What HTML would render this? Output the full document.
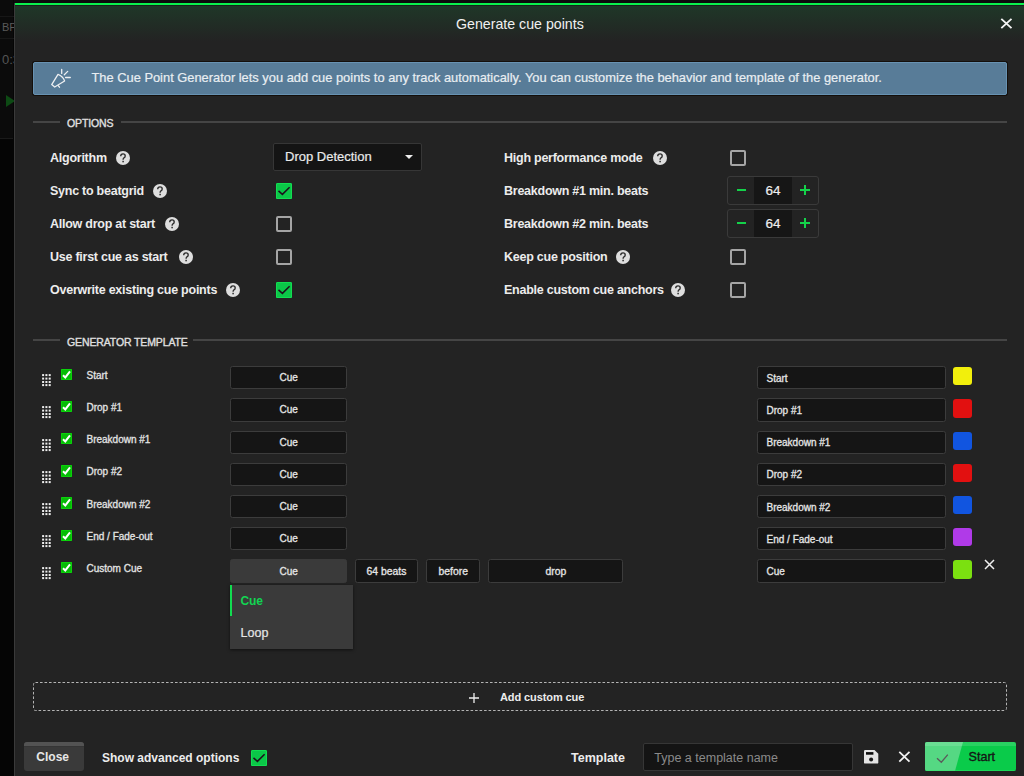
<!DOCTYPE html>
<html><head><meta charset="utf-8">
<style>
*{box-sizing:border-box;margin:0;padding:0}
html,body{width:1024px;height:776px;overflow:hidden;background:#0b0b0b;font-family:"Liberation Sans",sans-serif;color:#e6e6e6}
.a{position:absolute}
svg{display:block}
.t{position:absolute;white-space:nowrap;line-height:1}
.help{position:absolute;width:14px;height:14px;border-radius:50%;background:#dedede}
.help svg{position:absolute;left:0;top:0}
.cb{position:absolute;width:16px;height:16px;border-radius:2px}
.cb.on{background:#0bc748;box-shadow:inset 0 0 0 1px #12de52;border-radius:1.5px}
.cb.off{border:2px solid #a5a5a5}
.sec{position:absolute;height:2px;background:#454545}
.box{position:absolute;height:23.3px;background:#151515;border:1px solid #3c3c3c;border-radius:2.5px}
.sw{position:absolute;width:18.7px;height:18.3px;border-radius:3px}
.tcb{position:absolute;width:11.3px;height:11.3px;background:#06bb06;box-shadow:inset 0 0 0 1px #0ad20a;border-radius:1px}
.hd{position:absolute}
</style></head><body>
<div class="a" style="left:0;top:139px;width:14px;height:640px;background:#050505"></div>
<div class="a" style="left:0;top:138px;width:14px;height:1px;background:#1a1a1a"></div>
<div class="a" style="left:13px;top:0;width:1px;height:776px;background:#050505"></div>
<div class="a" style="left:0;top:16px;width:14px;height:1px;background:#171717"></div>
<div class="a" style="left:0;top:38px;width:14px;height:1px;background:#171717"></div>
<div class="t" style="left:2px;top:22.19px;font-size:11px;font-weight:normal;color:#5a5a5a;letter-spacing:0px;">BP</div>
<div class="t" style="left:2px;top:52.50px;font-size:13px;font-weight:normal;color:#555;letter-spacing:0px;">0:3</div>
<div class="a" style="left:6px;top:95px;width:0;height:0;border-left:9px solid #0d4a14;border-top:6px solid transparent;border-bottom:6px solid transparent"></div>
<div class="a" style="left:14px;top:3px;width:1020px;height:780px;background:#232323;border-left:1px solid #3a3a3a"></div>
<div class="a" style="left:15px;top:5px;width:1009px;height:36px;background:linear-gradient(#1f3828,#232323)"></div>
<div class="a" style="left:15px;top:5px;width:1009px;height:1px;background:#18221b"></div>
<div class="a" style="left:15px;top:3px;width:1009px;height:2px;background:#0af04c"></div>
<div class="t" style="left:456px;top:17.38px;font-size:14.2px;font-weight:normal;color:#f0f0f0;letter-spacing:0px;">Generate cue points</div>
<svg class="a" style="left:1000px;top:18px" width="13" height="12" viewBox="0 0 13 12"><path d="M1.3 0.9L11.5 10.1M11.5 0.9L1.3 10.1" stroke="#f4f4f4" stroke-width="1.9"/></svg>
<div class="a" style="left:32px;top:61px;width:976px;height:35px;background:#140f0b;border-radius:3px"></div><div class="a" style="left:33px;top:62px;width:974px;height:33px;background:#587c98;border:1px solid #6892b2;border-radius:2px"></div>
<svg class="a" style="left:46px;top:64px" width="30" height="30" viewBox="0 0 30 30" fill="none" stroke="#eef0f2" stroke-width="1.3" stroke-linejoin="round" stroke-linecap="round"><path d="M12 10.4Q17 12.2 18.6 17L8.7 23L5.7 20.6Z"/><path d="M12.4 21.8L13.5 23.2"/><path d="M15.7 5.3V9.4M18.3 10.7L21.7 7.4M19.6 13.5H24.3"/></svg>
<div class="t" style="left:91.5px;top:72.11px;font-size:12.87px;font-weight:normal;color:#e9eef2;letter-spacing:0px;-webkit-text-stroke:0.2px #e9eef2">The Cue Point Generator lets you add cue points to any track automatically. You can customize the behavior and template of the generator.</div>
<div class="sec" style="left:33px;top:121px;width:27px"></div>
<div class="t" style="left:67px;top:117.61px;font-size:10.5px;font-weight:normal;color:#e0e0e0;letter-spacing:-0.12px;-webkit-text-stroke:0.35px #e0e0e0">OPTIONS</div>
<div class="sec" style="left:121px;top:121px;width:886px"></div>
<div class="t" style="left:50px;top:151.92px;font-size:12.5px;font-weight:bold;color:#ececec;letter-spacing:-0.25px;">Algorithm</div>
<div class="help" style="left:116px;top:150.5px"><svg width="14" height="14" viewBox="0 0 14 14"><path d="M4.7 5.2Q4.7 2.9 7 2.9Q9.2 2.9 9.2 4.9Q9.2 6.1 8 6.8Q7.1 7.4 7.1 8.7" fill="none" stroke="#2a2a2a" stroke-width="1.35"/><rect x="6.35" y="9.8" width="1.5" height="1.5" fill="#2a2a2a"/></svg></div>
<div class="t" style="left:50px;top:184.92px;font-size:12.5px;font-weight:bold;color:#ececec;letter-spacing:-0.25px;">Sync to beatgrid</div>
<div class="help" style="left:152.5px;top:183.5px"><svg width="14" height="14" viewBox="0 0 14 14"><path d="M4.7 5.2Q4.7 2.9 7 2.9Q9.2 2.9 9.2 4.9Q9.2 6.1 8 6.8Q7.1 7.4 7.1 8.7" fill="none" stroke="#2a2a2a" stroke-width="1.35"/><rect x="6.35" y="9.8" width="1.5" height="1.5" fill="#2a2a2a"/></svg></div>
<div class="cb on" style="left:276px;top:183px"><svg width="16" height="16" viewBox="0 0 16 16"><path d="M2.5 7.9L6.4 11.4L13.6 4.2" fill="none" stroke="#1c101c" stroke-width="1.5"/></svg></div>
<div class="t" style="left:50px;top:217.92px;font-size:12.5px;font-weight:bold;color:#ececec;letter-spacing:-0.25px;">Allow drop at start</div>
<div class="help" style="left:165px;top:216.5px"><svg width="14" height="14" viewBox="0 0 14 14"><path d="M4.7 5.2Q4.7 2.9 7 2.9Q9.2 2.9 9.2 4.9Q9.2 6.1 8 6.8Q7.1 7.4 7.1 8.7" fill="none" stroke="#2a2a2a" stroke-width="1.35"/><rect x="6.35" y="9.8" width="1.5" height="1.5" fill="#2a2a2a"/></svg></div>
<div class="cb off" style="left:276px;top:216px"></div>
<div class="t" style="left:50px;top:250.92px;font-size:12.5px;font-weight:bold;color:#ececec;letter-spacing:-0.25px;">Use first cue as start</div>
<div class="help" style="left:179px;top:249.5px"><svg width="14" height="14" viewBox="0 0 14 14"><path d="M4.7 5.2Q4.7 2.9 7 2.9Q9.2 2.9 9.2 4.9Q9.2 6.1 8 6.8Q7.1 7.4 7.1 8.7" fill="none" stroke="#2a2a2a" stroke-width="1.35"/><rect x="6.35" y="9.8" width="1.5" height="1.5" fill="#2a2a2a"/></svg></div>
<div class="cb off" style="left:276px;top:249px"></div>
<div class="t" style="left:50px;top:283.92px;font-size:12.5px;font-weight:bold;color:#ececec;letter-spacing:-0.25px;">Overwrite existing cue points</div>
<div class="help" style="left:226.3px;top:282.5px"><svg width="14" height="14" viewBox="0 0 14 14"><path d="M4.7 5.2Q4.7 2.9 7 2.9Q9.2 2.9 9.2 4.9Q9.2 6.1 8 6.8Q7.1 7.4 7.1 8.7" fill="none" stroke="#2a2a2a" stroke-width="1.35"/><rect x="6.35" y="9.8" width="1.5" height="1.5" fill="#2a2a2a"/></svg></div>
<div class="cb on" style="left:276px;top:282px"><svg width="16" height="16" viewBox="0 0 16 16"><path d="M2.5 7.9L6.4 11.4L13.6 4.2" fill="none" stroke="#1c101c" stroke-width="1.5"/></svg></div>
<div class="a" style="left:273px;top:143px;width:149px;height:28px;background:#141414;border:1px solid #363636;border-radius:2px"></div>
<div class="t" style="left:285px;top:150.00px;font-size:13px;font-weight:normal;color:#eaeaea;letter-spacing:0px;-webkit-text-stroke:0.2px #eaeaea">Drop Detection</div>
<div class="a" style="left:405px;top:155px;width:0;height:0;border-top:4px solid #eee;border-left:4px solid transparent;border-right:4px solid transparent"></div>
<div class="t" style="left:504px;top:151.92px;font-size:12.5px;font-weight:bold;color:#ececec;letter-spacing:-0.25px;">High performance mode</div>
<div class="help" style="left:653px;top:150.5px"><svg width="14" height="14" viewBox="0 0 14 14"><path d="M4.7 5.2Q4.7 2.9 7 2.9Q9.2 2.9 9.2 4.9Q9.2 6.1 8 6.8Q7.1 7.4 7.1 8.7" fill="none" stroke="#2a2a2a" stroke-width="1.35"/><rect x="6.35" y="9.8" width="1.5" height="1.5" fill="#2a2a2a"/></svg></div>
<div class="cb off" style="left:730px;top:150px"></div>
<div class="t" style="left:504px;top:184.92px;font-size:12.5px;font-weight:bold;color:#ececec;letter-spacing:-0.25px;">Breakdown #1 min. beats</div>
<div class="a" style="left:727px;top:176px;width:92px;height:29px;border:1px solid #3a3a3a;border-radius:3px;background:#232323"></div>
<div class="a" style="left:754px;top:177px;width:38px;height:27px;background:#161616"></div>
<div class="t" style="left:765.5px;top:184.07px;font-size:13.5px;font-weight:normal;color:#eee;letter-spacing:0px;-webkit-text-stroke:0.2px #eee">64</div>
<div class="a" style="left:737px;top:189px;width:9px;height:2px;background:#14d24a"></div>
<div class="a" style="left:800px;top:189px;width:10px;height:2px;background:#14d24a"></div>
<div class="a" style="left:804px;top:185px;width:2px;height:10px;background:#14d24a"></div>
<div class="t" style="left:504px;top:217.92px;font-size:12.5px;font-weight:bold;color:#ececec;letter-spacing:-0.25px;">Breakdown #2 min. beats</div>
<div class="a" style="left:727px;top:209px;width:92px;height:29px;border:1px solid #3a3a3a;border-radius:3px;background:#232323"></div>
<div class="a" style="left:754px;top:210px;width:38px;height:27px;background:#161616"></div>
<div class="t" style="left:765.5px;top:217.07px;font-size:13.5px;font-weight:normal;color:#eee;letter-spacing:0px;-webkit-text-stroke:0.2px #eee">64</div>
<div class="a" style="left:737px;top:222px;width:9px;height:2px;background:#14d24a"></div>
<div class="a" style="left:800px;top:222px;width:10px;height:2px;background:#14d24a"></div>
<div class="a" style="left:804px;top:218px;width:2px;height:10px;background:#14d24a"></div>
<div class="t" style="left:504px;top:250.92px;font-size:12.5px;font-weight:bold;color:#ececec;letter-spacing:-0.25px;">Keep cue position</div>
<div class="help" style="left:615.5px;top:249.5px"><svg width="14" height="14" viewBox="0 0 14 14"><path d="M4.7 5.2Q4.7 2.9 7 2.9Q9.2 2.9 9.2 4.9Q9.2 6.1 8 6.8Q7.1 7.4 7.1 8.7" fill="none" stroke="#2a2a2a" stroke-width="1.35"/><rect x="6.35" y="9.8" width="1.5" height="1.5" fill="#2a2a2a"/></svg></div>
<div class="cb off" style="left:730px;top:249px"></div>
<div class="t" style="left:504px;top:283.92px;font-size:12.5px;font-weight:bold;color:#ececec;letter-spacing:-0.25px;">Enable custom cue anchors</div>
<div class="help" style="left:671px;top:282.5px"><svg width="14" height="14" viewBox="0 0 14 14"><path d="M4.7 5.2Q4.7 2.9 7 2.9Q9.2 2.9 9.2 4.9Q9.2 6.1 8 6.8Q7.1 7.4 7.1 8.7" fill="none" stroke="#2a2a2a" stroke-width="1.35"/><rect x="6.35" y="9.8" width="1.5" height="1.5" fill="#2a2a2a"/></svg></div>
<div class="cb off" style="left:730px;top:282px"></div>
<div class="sec" style="left:33px;top:339px;width:27px"></div>
<div class="t" style="left:67px;top:337.11px;font-size:10.5px;font-weight:normal;color:#e0e0e0;letter-spacing:-0.12px;-webkit-text-stroke:0.35px #e0e0e0">GENERATOR TEMPLATE</div>
<div class="sec" style="left:193px;top:339px;width:814px"></div>
<svg class="hd" style="left:42px;top:374.1px" width="10" height="13" viewBox="0 0 10 13" fill="#eee"><rect x="0.1" y="0.1" width="2" height="2"/><rect x="3.4" y="0.1" width="2" height="2"/><rect x="6.7" y="0.1" width="2" height="2"/><rect x="0.1" y="3.6" width="2" height="2"/><rect x="3.4" y="3.6" width="2" height="2"/><rect x="6.7" y="3.6" width="2" height="2"/><rect x="0.1" y="7.0" width="2" height="2"/><rect x="3.4" y="7.0" width="2" height="2"/><rect x="6.7" y="7.0" width="2" height="2"/><rect x="0.1" y="10.1" width="2" height="2"/><rect x="3.4" y="10.1" width="2" height="2"/><rect x="6.7" y="10.1" width="2" height="2"/></svg>
<div class="tcb" style="left:61px;top:369.0px"><svg width="12" height="12" viewBox="0 0 12 12"><path d="M2 6.2L4.3 8.4L9 2.3" fill="none" stroke="#fff" stroke-width="2"/></svg></div>
<div class="t" style="left:86.5px;top:370.84px;font-size:10px;font-weight:normal;color:#e4e4e4;letter-spacing:0px;-webkit-text-stroke:0.3px #e4e4e4">Start</div>
<div class="box" style="left:230px;top:366.1px;width:117px"></div>
<div class="t" style="left:279.5px;top:373.14px;font-size:10px;font-weight:normal;color:#e6e6e6;letter-spacing:0px;-webkit-text-stroke:0.3px #e6e6e6">Cue</div>
<div class="box" style="left:757px;top:366.1px;width:189px"></div>
<div class="t" style="left:766.5px;top:373.84px;font-size:10px;font-weight:normal;color:#e6e6e6;letter-spacing:0px;-webkit-text-stroke:0.3px #e6e6e6">Start</div>
<div class="sw" style="left:953px;top:367.1px;background:#f2ef0c"></div>
<svg class="hd" style="left:42px;top:406.3px" width="10" height="13" viewBox="0 0 10 13" fill="#eee"><rect x="0.1" y="0.1" width="2" height="2"/><rect x="3.4" y="0.1" width="2" height="2"/><rect x="6.7" y="0.1" width="2" height="2"/><rect x="0.1" y="3.6" width="2" height="2"/><rect x="3.4" y="3.6" width="2" height="2"/><rect x="6.7" y="3.6" width="2" height="2"/><rect x="0.1" y="7.0" width="2" height="2"/><rect x="3.4" y="7.0" width="2" height="2"/><rect x="6.7" y="7.0" width="2" height="2"/><rect x="0.1" y="10.1" width="2" height="2"/><rect x="3.4" y="10.1" width="2" height="2"/><rect x="6.7" y="10.1" width="2" height="2"/></svg>
<div class="tcb" style="left:61px;top:401.1px"><svg width="12" height="12" viewBox="0 0 12 12"><path d="M2 6.2L4.3 8.4L9 2.3" fill="none" stroke="#fff" stroke-width="2"/></svg></div>
<div class="t" style="left:86.5px;top:403.04px;font-size:10px;font-weight:normal;color:#e4e4e4;letter-spacing:0px;-webkit-text-stroke:0.3px #e4e4e4">Drop #1</div>
<div class="box" style="left:230px;top:398.3px;width:117px"></div>
<div class="t" style="left:279.5px;top:405.34px;font-size:10px;font-weight:normal;color:#e6e6e6;letter-spacing:0px;-webkit-text-stroke:0.3px #e6e6e6">Cue</div>
<div class="box" style="left:757px;top:398.3px;width:189px"></div>
<div class="t" style="left:766.5px;top:406.04px;font-size:10px;font-weight:normal;color:#e6e6e6;letter-spacing:0px;-webkit-text-stroke:0.3px #e6e6e6">Drop #1</div>
<div class="sw" style="left:953px;top:399.3px;background:#e21010"></div>
<svg class="hd" style="left:42px;top:438.5px" width="10" height="13" viewBox="0 0 10 13" fill="#eee"><rect x="0.1" y="0.1" width="2" height="2"/><rect x="3.4" y="0.1" width="2" height="2"/><rect x="6.7" y="0.1" width="2" height="2"/><rect x="0.1" y="3.6" width="2" height="2"/><rect x="3.4" y="3.6" width="2" height="2"/><rect x="6.7" y="3.6" width="2" height="2"/><rect x="0.1" y="7.0" width="2" height="2"/><rect x="3.4" y="7.0" width="2" height="2"/><rect x="6.7" y="7.0" width="2" height="2"/><rect x="0.1" y="10.1" width="2" height="2"/><rect x="3.4" y="10.1" width="2" height="2"/><rect x="6.7" y="10.1" width="2" height="2"/></svg>
<div class="tcb" style="left:61px;top:433.2px"><svg width="12" height="12" viewBox="0 0 12 12"><path d="M2 6.2L4.3 8.4L9 2.3" fill="none" stroke="#fff" stroke-width="2"/></svg></div>
<div class="t" style="left:86.5px;top:435.24px;font-size:10px;font-weight:normal;color:#e4e4e4;letter-spacing:0px;-webkit-text-stroke:0.3px #e4e4e4">Breakdown #1</div>
<div class="box" style="left:230px;top:430.5px;width:117px"></div>
<div class="t" style="left:279.5px;top:437.54px;font-size:10px;font-weight:normal;color:#e6e6e6;letter-spacing:0px;-webkit-text-stroke:0.3px #e6e6e6">Cue</div>
<div class="box" style="left:757px;top:430.5px;width:189px"></div>
<div class="t" style="left:766.5px;top:438.24px;font-size:10px;font-weight:normal;color:#e6e6e6;letter-spacing:0px;-webkit-text-stroke:0.3px #e6e6e6">Breakdown #1</div>
<div class="sw" style="left:953px;top:431.5px;background:#1155e0"></div>
<svg class="hd" style="left:42px;top:470.7px" width="10" height="13" viewBox="0 0 10 13" fill="#eee"><rect x="0.1" y="0.1" width="2" height="2"/><rect x="3.4" y="0.1" width="2" height="2"/><rect x="6.7" y="0.1" width="2" height="2"/><rect x="0.1" y="3.6" width="2" height="2"/><rect x="3.4" y="3.6" width="2" height="2"/><rect x="6.7" y="3.6" width="2" height="2"/><rect x="0.1" y="7.0" width="2" height="2"/><rect x="3.4" y="7.0" width="2" height="2"/><rect x="6.7" y="7.0" width="2" height="2"/><rect x="0.1" y="10.1" width="2" height="2"/><rect x="3.4" y="10.1" width="2" height="2"/><rect x="6.7" y="10.1" width="2" height="2"/></svg>
<div class="tcb" style="left:61px;top:465.3px"><svg width="12" height="12" viewBox="0 0 12 12"><path d="M2 6.2L4.3 8.4L9 2.3" fill="none" stroke="#fff" stroke-width="2"/></svg></div>
<div class="t" style="left:86.5px;top:467.44px;font-size:10px;font-weight:normal;color:#e4e4e4;letter-spacing:0px;-webkit-text-stroke:0.3px #e4e4e4">Drop #2</div>
<div class="box" style="left:230px;top:462.7px;width:117px"></div>
<div class="t" style="left:279.5px;top:469.74px;font-size:10px;font-weight:normal;color:#e6e6e6;letter-spacing:0px;-webkit-text-stroke:0.3px #e6e6e6">Cue</div>
<div class="box" style="left:757px;top:462.7px;width:189px"></div>
<div class="t" style="left:766.5px;top:470.44px;font-size:10px;font-weight:normal;color:#e6e6e6;letter-spacing:0px;-webkit-text-stroke:0.3px #e6e6e6">Drop #2</div>
<div class="sw" style="left:953px;top:463.7px;background:#e21010"></div>
<svg class="hd" style="left:42px;top:502.9px" width="10" height="13" viewBox="0 0 10 13" fill="#eee"><rect x="0.1" y="0.1" width="2" height="2"/><rect x="3.4" y="0.1" width="2" height="2"/><rect x="6.7" y="0.1" width="2" height="2"/><rect x="0.1" y="3.6" width="2" height="2"/><rect x="3.4" y="3.6" width="2" height="2"/><rect x="6.7" y="3.6" width="2" height="2"/><rect x="0.1" y="7.0" width="2" height="2"/><rect x="3.4" y="7.0" width="2" height="2"/><rect x="6.7" y="7.0" width="2" height="2"/><rect x="0.1" y="10.1" width="2" height="2"/><rect x="3.4" y="10.1" width="2" height="2"/><rect x="6.7" y="10.1" width="2" height="2"/></svg>
<div class="tcb" style="left:61px;top:497.4px"><svg width="12" height="12" viewBox="0 0 12 12"><path d="M2 6.2L4.3 8.4L9 2.3" fill="none" stroke="#fff" stroke-width="2"/></svg></div>
<div class="t" style="left:86.5px;top:499.63px;font-size:10px;font-weight:normal;color:#e4e4e4;letter-spacing:0px;-webkit-text-stroke:0.3px #e4e4e4">Breakdown #2</div>
<div class="box" style="left:230px;top:494.9px;width:117px"></div>
<div class="t" style="left:279.5px;top:501.94px;font-size:10px;font-weight:normal;color:#e6e6e6;letter-spacing:0px;-webkit-text-stroke:0.3px #e6e6e6">Cue</div>
<div class="box" style="left:757px;top:494.9px;width:189px"></div>
<div class="t" style="left:766.5px;top:502.63px;font-size:10px;font-weight:normal;color:#e6e6e6;letter-spacing:0px;-webkit-text-stroke:0.3px #e6e6e6">Breakdown #2</div>
<div class="sw" style="left:953px;top:495.9px;background:#1155e0"></div>
<svg class="hd" style="left:42px;top:535.1px" width="10" height="13" viewBox="0 0 10 13" fill="#eee"><rect x="0.1" y="0.1" width="2" height="2"/><rect x="3.4" y="0.1" width="2" height="2"/><rect x="6.7" y="0.1" width="2" height="2"/><rect x="0.1" y="3.6" width="2" height="2"/><rect x="3.4" y="3.6" width="2" height="2"/><rect x="6.7" y="3.6" width="2" height="2"/><rect x="0.1" y="7.0" width="2" height="2"/><rect x="3.4" y="7.0" width="2" height="2"/><rect x="6.7" y="7.0" width="2" height="2"/><rect x="0.1" y="10.1" width="2" height="2"/><rect x="3.4" y="10.1" width="2" height="2"/><rect x="6.7" y="10.1" width="2" height="2"/></svg>
<div class="tcb" style="left:61px;top:529.5px"><svg width="12" height="12" viewBox="0 0 12 12"><path d="M2 6.2L4.3 8.4L9 2.3" fill="none" stroke="#fff" stroke-width="2"/></svg></div>
<div class="t" style="left:86.5px;top:531.84px;font-size:10px;font-weight:normal;color:#e4e4e4;letter-spacing:0px;-webkit-text-stroke:0.3px #e4e4e4">End / Fade-out</div>
<div class="box" style="left:230px;top:527.1px;width:117px"></div>
<div class="t" style="left:279.5px;top:534.13px;font-size:10px;font-weight:normal;color:#e6e6e6;letter-spacing:0px;-webkit-text-stroke:0.3px #e6e6e6">Cue</div>
<div class="box" style="left:757px;top:527.1px;width:189px"></div>
<div class="t" style="left:766.5px;top:534.84px;font-size:10px;font-weight:normal;color:#e6e6e6;letter-spacing:0px;-webkit-text-stroke:0.3px #e6e6e6">End / Fade-out</div>
<div class="sw" style="left:953px;top:528.1px;background:#b03ae8"></div>
<svg class="hd" style="left:42px;top:567.3px" width="10" height="13" viewBox="0 0 10 13" fill="#eee"><rect x="0.1" y="0.1" width="2" height="2"/><rect x="3.4" y="0.1" width="2" height="2"/><rect x="6.7" y="0.1" width="2" height="2"/><rect x="0.1" y="3.6" width="2" height="2"/><rect x="3.4" y="3.6" width="2" height="2"/><rect x="6.7" y="3.6" width="2" height="2"/><rect x="0.1" y="7.0" width="2" height="2"/><rect x="3.4" y="7.0" width="2" height="2"/><rect x="6.7" y="7.0" width="2" height="2"/><rect x="0.1" y="10.1" width="2" height="2"/><rect x="3.4" y="10.1" width="2" height="2"/><rect x="6.7" y="10.1" width="2" height="2"/></svg>
<div class="tcb" style="left:61px;top:561.6px"><svg width="12" height="12" viewBox="0 0 12 12"><path d="M2 6.2L4.3 8.4L9 2.3" fill="none" stroke="#fff" stroke-width="2"/></svg></div>
<div class="t" style="left:86.5px;top:564.03px;font-size:10px;font-weight:normal;color:#e4e4e4;letter-spacing:0px;-webkit-text-stroke:0.3px #e4e4e4">Custom Cue</div>
<div class="box" style="left:230px;top:559.3px;width:117px;background:#3a3a3a;border-color:#3a3a3a"></div>
<div class="t" style="left:279.5px;top:566.83px;font-size:10px;font-weight:normal;color:#e6e6e6;letter-spacing:0px;-webkit-text-stroke:0.3px #e6e6e6">Cue</div>
<div class="box" style="left:355px;top:559.3px;width:63px"></div>
<div class="t" style="left:366.5px;top:566.50px;font-size:10.4px;font-weight:normal;color:#e6e6e6;letter-spacing:0px;-webkit-text-stroke:0.3px #e6e6e6">64 beats</div>
<div class="box" style="left:426px;top:559.3px;width:54px"></div>
<div class="t" style="left:438.5px;top:566.50px;font-size:10.4px;font-weight:normal;color:#e6e6e6;letter-spacing:0px;-webkit-text-stroke:0.3px #e6e6e6">before</div>
<div class="box" style="left:488px;top:559.3px;width:135px"></div>
<div class="t" style="left:545.5px;top:566.50px;font-size:10.4px;font-weight:normal;color:#e6e6e6;letter-spacing:0px;-webkit-text-stroke:0.3px #e6e6e6">drop</div>
<div class="box" style="left:757px;top:559.3px;width:189px"></div>
<div class="t" style="left:766.5px;top:567.03px;font-size:10px;font-weight:normal;color:#e6e6e6;letter-spacing:0px;-webkit-text-stroke:0.3px #e6e6e6">Cue</div>
<div class="sw" style="left:953px;top:560.3px;background:#7be010"></div>
<svg class="a" style="left:984px;top:558.8px" width="11" height="11" viewBox="0 0 11 11"><path d="M1 1L10 10M10 1L1 10" stroke="#f0f0f0" stroke-width="1.5"/></svg>
<div class="a" style="left:230px;top:585px;width:123px;height:64px;background:#3a3a3a;box-shadow:0 1px 3px rgba(0,0,0,0.55)"></div>
<div class="a" style="left:230px;top:585px;width:2px;height:31px;background:#12dc50"></div>
<div class="t" style="left:240.6px;top:595.34px;font-size:12px;font-weight:bold;color:#12d452;letter-spacing:-0.2px;">Cue</div>
<div class="t" style="left:240.6px;top:627.42px;font-size:12.5px;font-weight:normal;color:#e6e6e6;letter-spacing:0px;-webkit-text-stroke:0.2px #e6e6e6">Loop</div>
<svg class="a" style="left:32px;top:681px" width="976" height="31" viewBox="0 0 976 31"><rect x="1.5" y="1.5" width="973" height="28" rx="2" fill="none" stroke="#b4b4b4" stroke-width="1" stroke-dasharray="2.6 1.9"/></svg>
<svg class="a" style="left:468px;top:692px" width="12" height="12" viewBox="0 0 12 12"><path d="M1 6H11M6 1V11" stroke="#eee" stroke-width="1.3"/></svg>
<div class="t" style="left:500px;top:691.69px;font-size:11px;font-weight:bold;color:#ececec;letter-spacing:-0.1px;">Add custom cue</div>
<div class="a" style="left:24px;top:742px;width:60px;height:28.6px;background:#3a3a3a;border-radius:3px;overflow:hidden"><div class="a" style="left:0;top:0;width:60px;height:3.6px;background:#535353"></div><div class="a" style="left:0;top:3.6px;width:60px;height:1px;background:#353535"></div></div>
<div class="t" style="left:36.3px;top:750.84px;font-size:12px;font-weight:bold;color:#e6e6e6;letter-spacing:0px;">Close</div>
<div class="t" style="left:102px;top:752.04px;font-size:12px;font-weight:bold;color:#ececec;letter-spacing:0px;">Show advanced options</div>
<div class="cb on" style="left:251px;top:750px"><svg width="16" height="16" viewBox="0 0 16 16"><path d="M2.5 7.9L6.4 11.4L13.6 4.2" fill="none" stroke="#1c101c" stroke-width="1.5"/></svg></div>
<div class="t" style="left:571px;top:752.42px;font-size:12.5px;font-weight:bold;color:#ececec;letter-spacing:0px;">Template</div>
<div class="a" style="left:643px;top:743px;width:210px;height:28px;background:#141414;border:1px solid #363636;border-radius:2px"></div>
<div class="t" style="left:654.3px;top:751.92px;font-size:12.5px;font-weight:normal;color:#8a8a8a;letter-spacing:0px;">Type a template name</div>
<svg class="a" style="left:864px;top:750px" width="15" height="14" viewBox="0 0 15 14"><path d="M0 1.2Q0 0 1.2 0H10.5L14.3 3.8V12.4Q14.3 13.6 13.1 13.6H1.2Q0 13.6 0 12.4Z" fill="#e4e4e4"/><rect x="2" y="2.1" width="7.4" height="2.6" fill="#0a0a0a"/><circle cx="7.1" cy="9.6" r="2" fill="#1a1a1a"/></svg>
<svg class="a" style="left:897.5px;top:751px" width="13" height="12" viewBox="0 0 13 12"><path d="M1.3 0.9L11.5 10.7M11.5 0.9L1.3 10.7" stroke="#f2f2f2" stroke-width="1.8"/></svg>
<div class="a" style="left:925px;top:742px;width:91px;height:29px;background:#0acb4a;border-radius:2px;overflow:hidden"><div class="a" style="left:0;top:0;width:38px;height:29px;background:#55d883;clip-path:polygon(0 0,100% 0,79% 100%,0 100%)"></div><div class="a" style="left:0;top:0;width:91px;height:4px;background:rgba(255,255,255,0.13)"></div><div class="a" style="left:0;top:28px;width:91px;height:1px;background:rgba(40,230,100,0.5)"></div><svg class="a" style="left:8px;top:8.5px" width="16" height="14" viewBox="0 0 16 14"><path d="M4 7.2L8.3 11.2L14.8 3.6" fill="none" stroke="#5a5a5a" stroke-width="1.3"/></svg></div>
<div class="t" style="left:968.5px;top:750.83px;font-size:12.6px;font-weight:normal;color:#151515;letter-spacing:0px;-webkit-text-stroke:0.35px #151515">Start</div>
</body></html>
